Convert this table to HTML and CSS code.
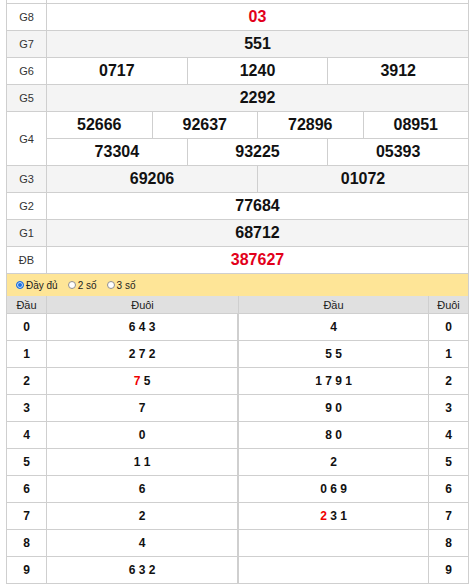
FILE: index.html
```html
<!DOCTYPE html>
<html lang="vi">
<head>
<meta charset="utf-8">
<title>Kết quả xổ số</title>
<link rel="stylesheet" href="styles.css">
</head>
<body>
<div class="kq">
  <div class="row stub"><div class="lbl"></div><div class="vals"></div></div>
  <div class="row"><div class="lbl">G8</div><div class="vals"><div class="v red">03</div></div></div>
  <div class="row alt"><div class="lbl">G7</div><div class="vals"><div class="v">551</div></div></div>
  <div class="row"><div class="lbl">G6</div><div class="vals"><div class="v">0717</div><div class="v">1240</div><div class="v">3912</div></div></div>
  <div class="row alt"><div class="lbl">G5</div><div class="vals"><div class="v">2292</div></div></div>
  <div class="row"><div class="lbl">G4</div>
    <div class="vals stack">
      <div class="sub"><div class="v">52666</div><div class="v">92637</div><div class="v">72896</div><div class="v">08951</div></div>
      <div class="sub"><div class="v">73304</div><div class="v">93225</div><div class="v">05393</div></div>
    </div>
  </div>
  <div class="row alt"><div class="lbl">G3</div><div class="vals"><div class="v">69206</div><div class="v">01072</div></div></div>
  <div class="row"><div class="lbl">G2</div><div class="vals"><div class="v">77684</div></div></div>
  <div class="row alt"><div class="lbl">G1</div><div class="vals"><div class="v">68712</div></div></div>
  <div class="row"><div class="lbl">ĐB</div><div class="vals"><div class="v red">387627</div></div></div>
</div>

<div class="tk">
  <div class="opts">
    <label class="opt"><span class="radio on"></span>Đầy đủ</label>
    <label class="opt"><span class="radio"></span>2 số</label>
    <label class="opt"><span class="radio"></span>3 số</label>
  </div>
  <div class="trow head">
    <div class="c1">Đầu</div><div class="c2">Đuôi</div><div class="c3">Đầu</div><div class="c4">Đuôi</div>
  </div>
  <div class="trow"><div class="c1">0</div><div class="c2">6 4 3</div><div class="c3">4</div><div class="c4">0</div></div>
  <div class="trow"><div class="c1">1</div><div class="c2">2 7 2</div><div class="c3">5 5</div><div class="c4">1</div></div>
  <div class="trow"><div class="c1">2</div><div class="c2"><span class="hl">7</span>&nbsp;5</div><div class="c3">1 7 9 1</div><div class="c4">2</div></div>
  <div class="trow"><div class="c1">3</div><div class="c2">7</div><div class="c3">9 0</div><div class="c4">3</div></div>
  <div class="trow"><div class="c1">4</div><div class="c2">0</div><div class="c3">8 0</div><div class="c4">4</div></div>
  <div class="trow"><div class="c1">5</div><div class="c2">1 1</div><div class="c3">2</div><div class="c4">5</div></div>
  <div class="trow"><div class="c1">6</div><div class="c2">6</div><div class="c3">0 6 9</div><div class="c4">6</div></div>
  <div class="trow"><div class="c1">7</div><div class="c2">2</div><div class="c3"><span class="hl">2</span>&nbsp;3 1</div><div class="c4">7</div></div>
  <div class="trow"><div class="c1">8</div><div class="c2">4</div><div class="c3"></div><div class="c4">8</div></div>
  <div class="trow"><div class="c1">9</div><div class="c2">6 3 2</div><div class="c3"></div><div class="c4">9</div></div>
</div>
</body>
</html>
```
FILE: styles.css
```css
html, body {
  margin: 0;
  padding: 0;
  background: #fff;
}
body {
  font-family: "Liberation Sans", Arial, sans-serif;
  color: #000;
}
.kq, .tk {
  margin-left: 6px;
  width: 461px;
  border-left: 1px solid #cfcfcf;
  border-right: 1px solid #cfcfcf;
}
.row {
  display: flex;
  border-bottom: 1px solid #cfcfcf;
  background: #fff;
}
.row.alt {
  background: #f4f4f4;
}
.row.stub .lbl,
.row.stub .vals {
  height: 3px;
}
.lbl {
  flex: none;
  width: 39px;
  border-right: 1px solid #cfcfcf;
  display: flex;
  align-items: center;
  justify-content: center;
  font-size: 11px;
  color: #333;
}
.vals {
  flex: 1;
  display: flex;
}
.vals.stack {
  flex-direction: column;
}
.sub {
  display: flex;
}
.sub + .sub {
  border-top: 1px solid #cfcfcf;
}
.v {
  flex: 1 1 0;
  height: 26px;
  display: flex;
  align-items: center;
  justify-content: center;
  font-size: 16px;
  font-weight: bold;
  color: #111;
}
.v + .v {
  border-left: 1px solid #cfcfcf;
}
.v.red {
  color: #e2001a;
}

.opts {
  height: 22px;
  background: #fee597;
  display: flex;
  align-items: center;
  padding-left: 9px;
  gap: 10px;
  font-size: 10px;
  color: #222;
}
.opt {
  display: flex;
  align-items: center;
  gap: 2px;
}
.radio {
  width: 6px;
  height: 6px;
  border: 1px solid #8f8f8f;
  border-radius: 50%;
  background: #fff;
}
.radio.on {
  border-color: #1a6fe0;
  background: #1a6fe0;
  box-shadow: inset 0 0 0 1px #cfe0fb;
}
.trow {
  display: flex;
  height: 26px;
  border-bottom: 1px solid #cfcfcf;
  font-size: 12px;
  font-weight: bold;
  color: #111;
}
.trow > div {
  display: flex;
  align-items: center;
  justify-content: center;
}
.c1 {
  width: 39px;
  border-right: 1px solid #cfcfcf;
}
.c2 {
  width: 190px;
  border-right: 1px solid #cfcfcf;
}
.c3 {
  width: 189px;
  border-left: 1px solid #cfcfcf;
  border-right: 1px solid #cfcfcf;
}
.c4 {
  width: 39px;
}
.trow.head {
  height: 17px;
  background: #e0e0e0;
  font-size: 11px;
  font-weight: normal;
  color: #222;
}
.trow.head .c2 {
  width: 191px;
  border-right: none;
}
.hl {
  color: #f00000;
}
```
